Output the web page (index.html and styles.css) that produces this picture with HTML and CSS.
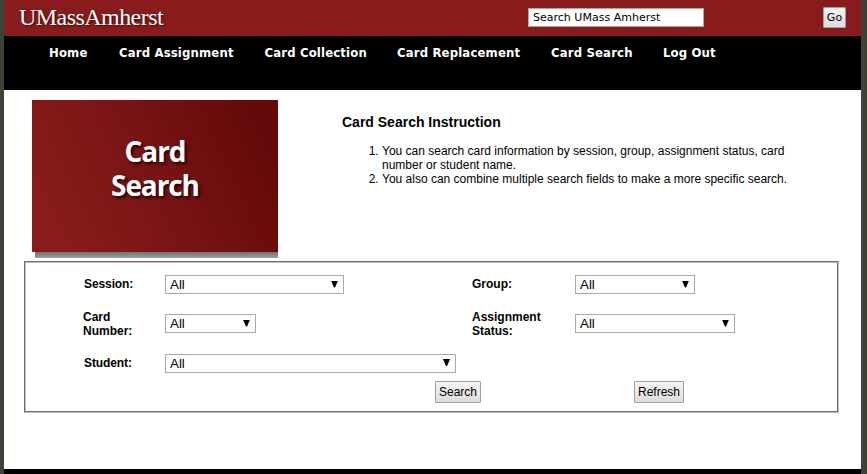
FILE: index.html
```
<!DOCTYPE html>
<html lang="en">
<head>
<meta charset="utf-8">
<title>Card Search</title>
<link rel="stylesheet" href="styles.css">
</head>
<body>
<div class="page">
  <header class="topbar">
    <div class="logo">UMassAmherst</div>
    <input class="site-search" type="text" value="Search UMass Amherst">
    <button class="btn go">Go</button>
  </header>
  <nav class="nav">
    <a class="n1">Home</a><a class="n2">Card Assignment</a><a class="n3">Card Collection</a><a class="n4">Card Replacement</a><a class="n5">Card Search</a><a class="n6">Log Out</a>
  </nav>
  <main>
    <section class="intro">
      <div class="banner-wrap">
        <div class="banner">Card<br>Search</div>
        <div class="banner-shadow"></div>
      </div>
      <div class="instructions">
        <h1>Card Search Instruction</h1>
        <ol>
          <li>You can search card information by session, group, assignment status, card<br>number or student name.</li>
          <li>You also can combine multiple search fields to make a more specific search.</li>
        </ol>
      </div>
    </section>
    <form class="panel">
      <div class="panel-inner">
        <div class="fields">
          <label class="ind">Session:</label><div class="select w179">All<i></i></div>
          <label class="up">Group:</label><div class="select w120">All<i></i></div>
          <label>Card<br>Number:</label><div class="select w91">All<i></i></div>
          <label>Assignment<br>Status:</label><div class="select w160">All<i></i></div>
          <label class="ind student">Student:</label><div class="select w291 student">All<i></i></div>
        </div>
        <div class="actions">
          <button type="button" class="btn search">Search</button>
          <button type="button" class="btn refresh">Refresh</button>
        </div>
      </div>
    </form>
  </main>
  <footer></footer>
</div>
</body>
</html>
```
FILE: styles.css
```
* { box-sizing: border-box; }
html, body { height: 100%; overflow: hidden; }
body {
  margin: 0;
  padding: 0 6px 0 4px;
  background: #424139;
  font-family: "Liberation Sans", Arial, sans-serif;
  font-size: 12px;
  color: #000;
}
.page { height: 474px; background: #fff; display: flex; flex-direction: column; }
.topbar { height: 36px; background: #881c1c; display: flex; align-items: flex-start; flex: none; }
.logo {
  width: 524px;
  padding-left: 15px;
  font-family: "Liberation Serif", "Times New Roman", serif;
  font-size: 24px;
  line-height: 35px;
  letter-spacing: -0.55px;
  color: #fff;
  text-shadow: 1px 1px 2px #3a0808;
}
.site-search {
  width: 176px;
  height: 19px;
  margin-top: 8px;
  padding: 0 4px;
  border: 1px solid #a9a9a9;
  border-radius: 0;
  background: #fff;
  font: 11px "DejaVu Sans", Verdana, sans-serif;
  letter-spacing: 0.01px;
}
.btn {
  padding: 0;
  border: 1px solid #a0a0a0;
  border-radius: 1px;
  background: linear-gradient(#f5f5f5, #dcdcdc);
  font: 12px "Liberation Sans", Arial, sans-serif;
  color: #000;
}
.go { width: 23px; height: 21px; margin: 7px 0 0 119px; font: 11px "DejaVu Sans", Verdana, sans-serif; }
.nav {
  height: 54px;
  padding: 9px 0 0 45px;
  background: #000;
  flex: none;
  display: flex;
  font: bold 13px/16px "DejaVu Sans Condensed", "DejaVu Sans", Tahoma, sans-serif;
  font-stretch: semi-condensed;
  letter-spacing: 0.15px;
  color: #fff;
  white-space: nowrap;
}
.n1 { width: 70px; }
.n2 { width: 145.5px; }
.n3 { width: 132.5px; }
.n4 { width: 154px; }
.n5 { width: 112px; }
main { padding: 10px 22px 0 20px; flex: 1; }
.intro { display: flex; height: 161px; padding-left: 8px; }
.banner-wrap { width: 246px; flex: none; }
.banner {
  height: 152px;
  padding-top: 34px;
  text-align: center;
  background: linear-gradient(65deg, #881c1c 10%, #7b1515 45%, #650a0a 88%);
  color: #fff;
  font: bold 28px/34px "Open Sans", "Noto Sans", sans-serif;
  letter-spacing: -1.1px;
  text-shadow: 2px 2px 3px #200303;
}
.banner-shadow { height: 6px; margin-left: 3px; background: linear-gradient(#707070, #a0a0a0); }
.instructions { padding: 14px 0 0 64px; line-height: 14px; white-space: nowrap; }
h1 { margin: 0; font-size: 14px; line-height: 16px; }
ol { margin: 14px 0 0; padding-left: 40px; }
.panel { height: 152px; border: 1px solid; border-color: #6e6e6e #bdbdbd #bdbdbd #6e6e6e; }
.panel-inner { height: 150px; border: 1px solid; border-color: #bdbdbd #6e6e6e #6e6e6e #bdbdbd; padding: 2px 0 0 57px; }
.fields {
  display: grid;
  grid-template-columns: 82px 307px 103px 1fr;
  grid-template-rows: 39px 39px 38px;
  align-items: center;
}
label { font-weight: bold; line-height: 14px; }
.ind { padding-left: 1px; letter-spacing: -0.1px; }
.ind:not(.student), .up { padding-bottom: 2px; }
.select {
  display: flex;
  justify-content: space-between;
  align-items: center;
  height: 19px;
  padding: 0 5px 0 4px;
  border: 1px solid #a9a9a9;
  font-size: 13.33px;
  line-height: 17px;
}
.select i { width: 7px; height: 7px; margin-bottom: 1px; background: #000; clip-path: polygon(0 0, 100% 0, 58% 100%, 42% 100%); }
.w179 { width: 179px; }
.w120 { width: 120px; }
.w91 { width: 91px; }
.w160 { width: 160px; }
.w291 { width: 291px; }
.student { margin-top: 2px; }
.actions { display: flex; padding-left: 352px; gap: 153px; }
.actions .btn { height: 22px; }
.search { width: 46px; }
.refresh { width: 50px; }
footer { height: 5px; background: #000; flex: none; }
```
